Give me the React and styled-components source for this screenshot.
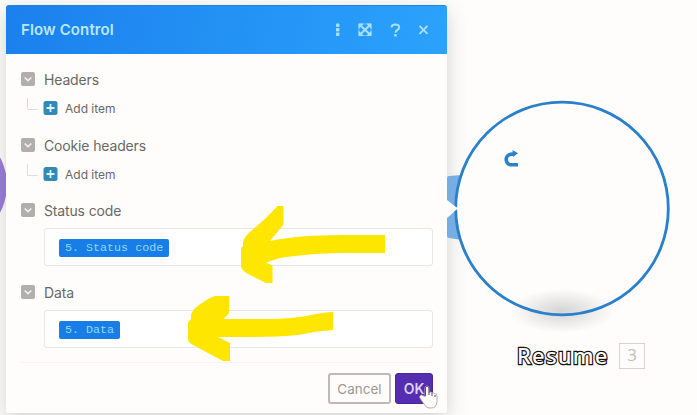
import React from "react";
import styled, { createGlobalStyle } from "styled-components";

const Global = createGlobalStyle`
  * { box-sizing: border-box; }
  body { margin: 0; background: #fefdfb; overflow: hidden; }
`;

const Canvas = styled.main`
  position: relative;
  width: 697px;
  height: 415px;
  padding: 5px 0 0 6px;
  overflow: hidden;
  background: #fefdfb;
  font-family: Inter, "Liberation Sans", sans-serif;
  color: #6a6866;
`;

const PurpleNode = styled.div`
  position: absolute;
  left: -109px;
  top: 127px;
  width: 116px;
  height: 116px;
  border-radius: 50%;
  background: #9a7ddd;
`;

const Panel = styled.section`
  position: relative;
  width: 441px;
  height: 408px;
  border-radius: 3px 3px 2px 2px;
  background: #fefdfb;
  box-shadow: 0 6px 20px rgba(60, 70, 65, 0.24);
`;

const Header = styled.header`
  display: flex;
  align-items: center;
  justify-content: space-between;
  height: 49px;
  padding: 0 18px 0 15px;
  border-radius: 3px 3px 0 0;
  border-top: 1px solid #2383d6;
  background: linear-gradient(100deg, #1b80ed, #2ba2fc);
`;

const Title = styled.h1`
  margin: 0;
  font-size: 15px;
  font-weight: 600;
  line-height: 20px;
  letter-spacing: 0.13px;
  color: #b9e8fd;
`;

const Tools = styled.div`
  display: flex;
  align-items: center;
  svg { display: block; }
`;

const Body = styled.div`
  display: flex;
  flex-direction: column;
  padding: 14px 14px 0 15px;
`;

const Label = styled.div`
  display: flex;
  align-items: center;
  gap: 9px;
  height: 22px;
  margin-top: ${(p) => p.$gap || 0}px;
  font-size: 14px;
  letter-spacing: -0.15px;
`;

const AddRow = styled.div`
  display: flex;
  align-items: center;
  height: 20px;
  margin-top: 8px;
  padding-left: 6px;
  font-size: 12px;
  svg { display: block; }
`;

const AddText = styled.span`
  margin-left: 7px;
`;

const Field = styled.div`
  display: flex;
  align-items: center;
  width: 389px;
  height: 38px;
  margin: 7px 0 0 23px;
  padding: 2px 0 0 14px;
  border: 1px solid #e9e6e3;
  border-radius: 3px;
  background: #fff;
`;

const Pill = styled.span`
  width: ${(p) => p.$width}px;
  height: 18px;
  padding-left: 6px;
  border-radius: 2px;
  background: #187de6;
  color: #8fd9fc;
  font: 11.7px/18px "Liberation Mono", monospace;
  white-space: pre;
`;

const Footer = styled.footer`
  display: flex;
  justify-content: flex-end;
  gap: 4px;
  margin-top: 14px;
  padding: 10px 0 0;
  border-top: 1px solid #f9f4f1;
`;

const Button = styled.button`
  width: ${(p) => (p.$primary ? 38 : 63)}px;
  height: 31px;
  padding: 0;
  border: ${(p) => (p.$primary ? "1px solid #49269b" : "2px solid #bdbab8")};
  border-radius: 3px;
  background: ${(p) => (p.$primary ? "#542db0" : "#fefdfb")};
  color: ${(p) => (p.$primary ? "#dccff5" : "#9b9896")};
  font: ${(p) => (p.$primary ? "600 14px" : "400 13.5px")} Inter, sans-serif;
`;

const Overlay = styled.svg`
  position: absolute;
  left: ${(p) => p.$x}px;
  top: ${(p) => p.$y}px;
`;

const NodeCaption = styled.div`
  position: absolute;
  left: 517px;
  top: 341px;
  display: flex;
  align-items: center;
  height: 29px;
`;

const NodeName = styled.span`
  width: 102px;
  margin-top: -2px;
  color: #fff;
  font: 500 22px/28px "Noto Sans", sans-serif;
  letter-spacing: 1.2px;
  -webkit-text-stroke: 2.4px #17120f;
  paint-order: stroke fill;
`;

const NodeNumber = styled.span`
  width: 26px;
  height: 26px;
  margin-top: 1px;
  border: 1px solid #d8d2d0;
  color: #c3bdba;
  font: 17px/22px "Open Sans", sans-serif;
  text-align: center;
`;

const Chevron = () => (
  <svg width="14" height="14" viewBox="0 0 14 14">
    <rect width="14" height="14" rx="2" fill="#b1afad" />
    <path d="M3.7 5.5 7 8.6 10.3 5.5" fill="none" stroke="#f3f0ed" strokeWidth="1.7" />
  </svg>
);

const AddItem = () => (
  <AddRow>
    <svg width="31" height="20" viewBox="0 0 31 20">
      <path d="M.5 0V11.5H10.5" fill="none" stroke="#dfdcda" />
      <rect x="16.5" y="3" width="14" height="14" rx="2.5" fill="#3289b5" />
      <path d="M23.5 6v8M19.5 10h8" stroke="#d9f5fc" strokeWidth="1.8" />
    </svg>
    <AddText>Add item</AddText>
  </AddRow>
);

const HeaderIcons = () => (
  <svg width="94" height="16" viewBox="0 0 94 16" fill="none" stroke="#a8e0fd">
    <g fill="#a8e0fd" stroke="none">
      <rect x="1" y="1.5" width="3.4" height="3.4" rx=".7" />
      <rect x="1" y="6" width="3.4" height="3.4" rx=".7" />
      <rect x="1" y="10.5" width="3.4" height="3.4" rx=".7" />
      <path d="M23.500 1.500h5.500l-5.500 5.500zM36.500 1.500v5.500L31 1.500zM36.500 14H31l5.500-5.500zM23.500 14V8.500l5.500 5.500z" />
      <rect x="59.2" y="12" width="2.5" height="2.5" />
    </g>
    <path d="m25 3 10 9.500M35 3 25 12.500" strokeWidth="2" />
    <path d="M24 2h12v11.500H24z" strokeWidth="1" opacity=".5" />
    <path d="M56.500 5.300C56.700 3.300 58.300 2.500 60.400 2.500c2.300 0 3.800 1.100 3.800 2.900 0 2.600-3.700 2.500-3.700 5.400" strokeWidth="2" />
    <path d="m84.500 3.800 8 8m0-8-8 8" strokeWidth="1.8" />
  </svg>
);

export default function App() {
  return (
    <>
      <Global />
      <Canvas>
        <PurpleNode />
        <Panel>
          <Header>
            <Title>Flow Control</Title>
            <Tools><HeaderIcons /></Tools>
          </Header>
          <Body>
            <Label><Chevron />Headers</Label>
            <AddItem />
            <Label $gap={16}><Chevron />Cookie headers</Label>
            <AddItem />
            <Label $gap={15}><Chevron />Status code</Label>
            <Field><Pill $width={110}>5. Status code</Pill></Field>
            <Label $gap={15}><Chevron />Data</Label>
            <Field><Pill $width={61}>5. Data</Pill></Field>
            <Footer>
              <Button>Cancel</Button>
              <Button $primary>OK</Button>
            </Footer>
          </Body>
        </Panel>

        <Overlay $x={447} $y={95} width="228" height="240" viewBox="447 95 228 240">
          <defs>
            <radialGradient id="groundShadow">
              <stop offset="0" stopColor="#6f7876" stopOpacity=".3" />
              <stop offset="1" stopColor="#6f7876" stopOpacity="0" />
            </radialGradient>
          </defs>
          <path d="M447 178q0-2 2-2l13-1v65l-13-2q-2 0-2-2z" fill="#76aee3" />
          <path d="M447 200 458 208.500 447 218z" fill="#fefdfb" />
          <circle cx="562" cy="208.500" r="106.300" fill="#fefdfb" />
          <ellipse cx="562" cy="311" rx="52" ry="22" fill="url(#groundShadow)" />
          <circle cx="562" cy="208.500" r="106.300" fill="none" stroke="#2a80ca" strokeWidth="2.800" />
          <path d="M453 205 458.500 208.500 453 212z" fill="#fefdfb" />
          <path d="M518 164.800h-6.300a5.300 5.300 0 0 1-1.200-10.500q1-.3 3-.3" fill="none" stroke="#2a80ca" strokeWidth="3.600" />
          <path d="m512.500 150 5.500 3.200-5 3.800z" fill="#2a80ca" />
        </Overlay>
        <NodeCaption>
          <NodeName>Resume</NodeName>
          <NodeNumber>3</NodeNumber>
        </NodeCaption>

        <Overlay $x={180} $y={200} width="210" height="165" viewBox="180 200 210 165" fill="#ffe600">
          <path d="M277.500 206h6v18.500L270 241q28-6 72-6h43v18h-46q-35 1-59 5l-14 4.500 6.500 3V283H266l-18-9q-7-4-7-8v-18l2-2v-4q1-5 8-11l15-13z" />
          <path d="M215 296h14v17.500l-5.500 5.500h45q20 0 38-3 18-4 26.500-4v18q-17 1-35 5-18 2-45 2h-35l12 6v18h-7l-30-16q-5-3-5-5v-18l3-3v-4q1-5 8-10 11-8 16-9z" />
        </Overlay>
        <Overlay $x={418} $y={384} width="20" height="25" viewBox="0 0 20 25">
          <path d="M7 13V4Q7 2 9 2t2 2v5q1-2 3 0 1-1 3 1 2-1 2 2v5q0 7-6 7h-2q-3 0-5-4l-4-6q-1-2 1-3 2 0 4 2z" fill="#fffdfb" stroke="#b9b1ae" />
          <path d="M7.500 12V4Q7.500 2 9 2t2 2v7m3-2v3m3-1v2" fill="none" stroke="#5b4d68" />
        </Overlay>
      </Canvas>
    </>
  );
}
